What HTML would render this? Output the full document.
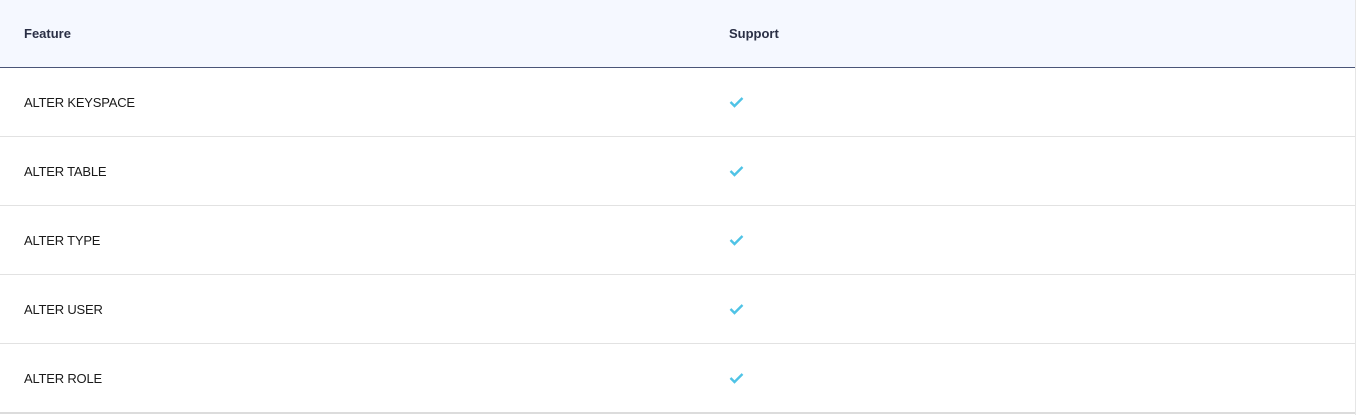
<!DOCTYPE html>
<html><head><style>
body{margin:0;width:1356px;height:415px;background:#fff;font-family:"Liberation Sans",sans-serif;overflow:hidden;position:relative}
.hd{position:absolute;left:0;top:0;width:1355px;height:67px;background:#f5f8ff;border-bottom:1px solid #4a5578}
.hd span{position:absolute;top:26px;font-size:13px;font-weight:bold;color:#2a2f45}
.row{position:absolute;left:0;width:1355px;height:68px;border-bottom:1px solid #e2e2e2}
.row span{position:absolute;left:24px;top:27px;font-size:13px;color:#1a1a1a;letter-spacing:-0.2px}
.row svg{position:absolute;left:729px;top:28px}
.edge{position:absolute;right:0;top:0;width:1px;height:415px;background:#e6e6e6}
</style></head><body>
<div class="hd"><span style="left:24px">Feature</span><span style="left:729px">Support</span></div>
<div class="row" style="top:68px"><span>ALTER KEYSPACE</span><svg width="15" height="12" viewBox="0 0 15 12"><path d="M1.5 6l4 4 8-8" fill="none" stroke="#4fc3e6" stroke-width="2.4"/></svg></div>
<div class="row" style="top:137px"><span>ALTER TABLE</span><svg width="15" height="12" viewBox="0 0 15 12"><path d="M1.5 6l4 4 8-8" fill="none" stroke="#4fc3e6" stroke-width="2.4"/></svg></div>
<div class="row" style="top:206px"><span>ALTER TYPE</span><svg width="15" height="12" viewBox="0 0 15 12"><path d="M1.5 6l4 4 8-8" fill="none" stroke="#4fc3e6" stroke-width="2.4"/></svg></div>
<div class="row" style="top:275px"><span>ALTER USER</span><svg width="15" height="12" viewBox="0 0 15 12"><path d="M1.5 6l4 4 8-8" fill="none" stroke="#4fc3e6" stroke-width="2.4"/></svg></div>
<div class="row" style="top:344px;border-bottom:2px solid #dcdcdc"><span>ALTER ROLE</span><svg width="15" height="12" viewBox="0 0 15 12"><path d="M1.5 6l4 4 8-8" fill="none" stroke="#4fc3e6" stroke-width="2.4"/></svg></div>
<div class="edge"></div>
</body></html>
